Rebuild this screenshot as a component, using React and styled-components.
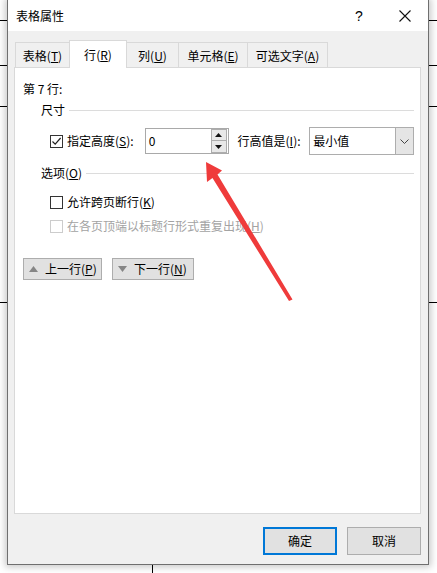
import React from 'react';
import styled, { createGlobalStyle } from 'styled-components';

const GlobalStyle = createGlobalStyle`
  html, body { margin: 0; padding: 0; }
  body {
    font-family: "Noto Sans CJK SC", "Noto Sans", sans-serif;
    font-size: 12px;
    color: #000;
    overflow: hidden;
  }
`;

const tabs = [
  { label: '表格', key: 'T', width: 55 },
  { label: '行', key: 'R', width: 58, active: true },
  { label: '列', key: 'U', width: 53 },
  { label: '单元格', key: 'E', width: 70 },
  { label: '可选文字', key: 'A', width: 81 },
];

function Accel({ label, k, suffix = '' }) {
  return (
    <>
      {label}(<u>{k}</u>){suffix}
    </>
  );
}

function CheckBox({ checked, disabled }) {
  return (
    <StyledBox $disabled={disabled}>
      {checked && (
        <svg width="11" height="11" viewBox="0 0 11 11">
          <path d="M1.5 5.5 L4.2 8.2 L9.6 2" fill="none" stroke="#222" strokeWidth="1.2" />
        </svg>
      )}
    </StyledBox>
  );
}

function Tri({ down, color = '#111', w = 7, h = 4 }) {
  return (
    <svg width={w} height={h} viewBox={`0 0 ${w} ${h}`}>
      <polygon points={down ? `0,0 ${w},0 ${w / 2},${h}` : `0,${h} ${w},${h} ${w / 2},0`} fill={color} />
    </svg>
  );
}

function App() {
  return (
    <Page>
      <GlobalStyle />
      <Dialog>
        <TitleBar>
          <Title>表格属性</Title>
          <TitleButton>?</TitleButton>
          <TitleButton>
            <svg width="12" height="12" viewBox="0 0 12 12">
              <path d="M0.5 0.5 L11.5 11.5 M11.5 0.5 L0.5 11.5" stroke="#111" strokeWidth="1.1" />
            </svg>
          </TitleButton>
        </TitleBar>
        <Body>
          <TabRow>
            {tabs.map((t) => (
              <Tab key={t.key} $active={t.active} style={{ width: t.width }}>
                <Accel label={t.label} k={t.key} />
              </Tab>
            ))}
          </TabRow>
          <Panel>
            <RowTitle>第 7 行:</RowTitle>
            <Section>
              <span>尺寸</span>
              <Rule />
            </Section>
            <HeightRow>
              <CheckLabel>
                <CheckBox checked />
                <span><Accel label="指定高度" k="S" suffix=":" /></span>
              </CheckLabel>
              <SpinBox>
                <SpinValue>0</SpinValue>
                <SpinButtons>
                  <SpinButton><Tri /></SpinButton>
                  <SpinButton><Tri down /></SpinButton>
                </SpinButtons>
              </SpinBox>
              <FieldLabel><Accel label="行高值是" k="I" suffix=":" /></FieldLabel>
              <Select>
                <SelectValue>最小值</SelectValue>
                <SelectArrow>
                  <svg width="9" height="5" viewBox="0 0 9 5">
                    <path d="M0.5 0.5 L4.5 4.5 L8.5 0.5" fill="none" stroke="#444" strokeWidth="1" />
                  </svg>
                </SelectArrow>
              </Select>
            </HeightRow>
            <Section $gap={10}>
              <span><Accel label="选项" k="O" /></span>
              <Rule />
            </Section>
            <OptionRow $top={13}>
              <CheckBox />
              <span><Accel label="允许跨页断行" k="K" /></span>
            </OptionRow>
            <OptionRow $top={8} $disabled>
              <CheckBox disabled />
              <span><Accel label="在各页顶端以标题行形式重复出现" k="H" /></span>
            </OptionRow>
            <NavRow>
              <NavButton style={{ width: 79 }}>
                <Tri color="#858585" w={9} h={6} />
                <span><Accel label="上一行" k="P" /></span>
              </NavButton>
              <NavButton style={{ width: 82 }}>
                <Tri down color="#858585" w={9} h={6} />
                <span><Accel label="下一行" k="N" /></span>
              </NavButton>
            </NavRow>
          </Panel>
          <Footer>
            <DialogButton $primary>确定</DialogButton>
            <DialogButton>取消</DialogButton>
          </Footer>
        </Body>
      </Dialog>

      <Arrow width="437" height="573" viewBox="0 0 437 573">
        <polygon
          points="206,162 207,182 212.5,178 289,301 292.5,299.5 217.5,174.5 222,170.5"
          fill="#ef3b3b"
        />
      </Arrow>
    </Page>
  );
}

export default App;

const Page = styled.div`
  position: relative;
  width: 437px;
  height: 573px;
  overflow: hidden;
  background:
    linear-gradient(#000, #000) 0 20px / 100% 1px no-repeat,
    linear-gradient(#000, #000) 0 65px / 100% 1px no-repeat,
    linear-gradient(#000, #000) 0 106px / 100% 1px no-repeat,
    linear-gradient(#000, #000) 0 302px / 100% 1px no-repeat,
    linear-gradient(#000, #000) 152px 565px / 1px 10px no-repeat,
    #fff;
`;

const Dialog = styled.div`
  margin-left: 7px;
  width: 420px;
  height: 564px;
  border: 1px solid #6f6f6f;
  border-top: none;
  background: #f0f0f0;
  box-shadow: 0 0 7px 2px rgba(0, 0, 0, 0.22);
  display: flex;
  flex-direction: column;
`;

const TitleBar = styled.div`
  height: 31px;
  background: #fff;
  display: flex;
  align-items: center;
`;

const Title = styled.div`
  flex: 1;
  padding-left: 8px;
  font-size: 12px;
  line-height: 16px;
  margin-top: 1px;
`;

const TitleButton = styled.div`
  width: 46px;
  height: 31px;
  display: flex;
  align-items: center;
  justify-content: center;
  font-family: "Liberation Sans", sans-serif;
  font-size: 14px;
`;

const Body = styled.div`
  flex: 1;
  display: flex;
  flex-direction: column;
  padding: 9px 7px 0 6px;
`;

const TabRow = styled.div`
  height: 28px;
  display: flex;
  align-items: flex-end;
  padding-left: 1px;
`;

const Tab = styled.div`
  position: relative;
  box-sizing: border-box;
  height: ${(p) => (p.$active ? 28 : 25)}px;
  margin-bottom: ${(p) => (p.$active ? 0 : 1)}px;
  margin-right: -1px;
  border: 1px solid #d9d9d9;
  border-bottom: none;
  background: ${(p) => (p.$active ? '#fff' : '#f0f0f0')};
  z-index: ${(p) => (p.$active ? 2 : 1)};
  display: flex;
  align-items: center;
  justify-content: center;
  line-height: 16px;
  padding-top: ${(p) => (p.$active ? 0 : 1)}px;
`;

const Panel = styled.div`
  position: relative;
  z-index: 1;
  box-sizing: border-box;
  margin-top: -1px;
  height: 447px;
  background: #fff;
  border: 1px solid #d9d9d9;
  padding: 13px 6px 0 8px;
  display: flex;
  flex-direction: column;
`;

const RowTitle = styled.div`
  line-height: 16px;
`;

const Section = styled.div`
  margin-top: ${(p) => p.$gap ?? 5}px;
  margin-left: 18px;
  display: flex;
  align-items: center;
  gap: 4px;
  line-height: 16px;
`;

const Rule = styled.div`
  flex: 1;
  height: 1px;
  background: #dcdcdc;
`;

const HeightRow = styled.div`
  margin-top: 9px;
  height: 28px;
  display: flex;
  align-items: center;
`;

const CheckLabel = styled.div`
  margin-left: 27px;
  width: 95px;
  display: flex;
  align-items: center;
  gap: 4px;
  line-height: 16px;
`;

const StyledBox = styled.span`
  box-sizing: border-box;
  width: 13px;
  height: 13px;
  flex: none;
  border: 1px solid ${(p) => (p.$disabled ? '#cccccc' : '#333')};
  background: #fff;
  display: flex;
  align-items: center;
  justify-content: center;
`;

const SpinBox = styled.div`
  box-sizing: border-box;
  width: 84px;
  height: 26px;
  border: 1px solid #a9a9a9;
  background: #fff;
  display: flex;
  align-items: center;
  justify-content: space-between;
  padding: 0 1px 0 3px;
`;

const SpinValue = styled.span`
  line-height: 16px;
`;

const SpinButtons = styled.div`
  width: 16px;
  display: flex;
  flex-direction: column;
`;

const SpinButton = styled.div`
  box-sizing: border-box;
  height: 12px;
  border: 1px solid #adadad;
  background: #e8e8e8;
  display: flex;
  align-items: center;
  justify-content: center;
  & + & {
    margin-top: -1px;
    height: 13px;
  }
`;

const FieldLabel = styled.span`
  margin-left: 9px;
  width: 72px;
  line-height: 16px;
`;

const Select = styled.div`
  box-sizing: border-box;
  width: 105px;
  height: 28px;
  border: 1px solid #adadad;
  background: #fff;
  display: flex;
  align-items: stretch;
`;

const SelectValue = styled.span`
  flex: 1;
  padding-left: 3px;
  display: flex;
  align-items: center;
  line-height: 16px;
`;

const SelectArrow = styled.span`
  width: 17px;
  background: #e5e5e5;
  border-left: 1px solid #adadad;
  display: flex;
  align-items: center;
  justify-content: center;
`;

const OptionRow = styled.div`
  margin-top: ${(p) => p.$top}px;
  margin-left: 27px;
  display: flex;
  align-items: center;
  gap: 4px;
  line-height: 16px;
  color: ${(p) => (p.$disabled ? '#a3a3a3' : '#000')};
`;

const NavRow = styled.div`
  margin-top: 24px;
  display: flex;
  gap: 10px;
`;

const NavButton = styled.div`
  box-sizing: border-box;
  height: 22px;
  border: 1px solid #adadad;
  background: #e1e1e1;
  display: flex;
  align-items: center;
  gap: 7px;
  padding-left: 5px;
  line-height: 16px;
`;

const Footer = styled.div`
  margin-top: 13px;
  display: flex;
  justify-content: flex-end;
  gap: 10px;
`;

const DialogButton = styled.div`
  box-sizing: border-box;
  width: 74px;
  height: 28px;
  border: ${(p) => (p.$primary ? '2px solid #0078d7' : '1px solid #adadad')};
  background: #e1e1e1;
  display: flex;
  align-items: center;
  justify-content: center;
  line-height: 16px;
`;

const Arrow = styled.svg`
  position: absolute;
  left: 0;
  top: 0;
  z-index: 10;
  pointer-events: none;
`;
